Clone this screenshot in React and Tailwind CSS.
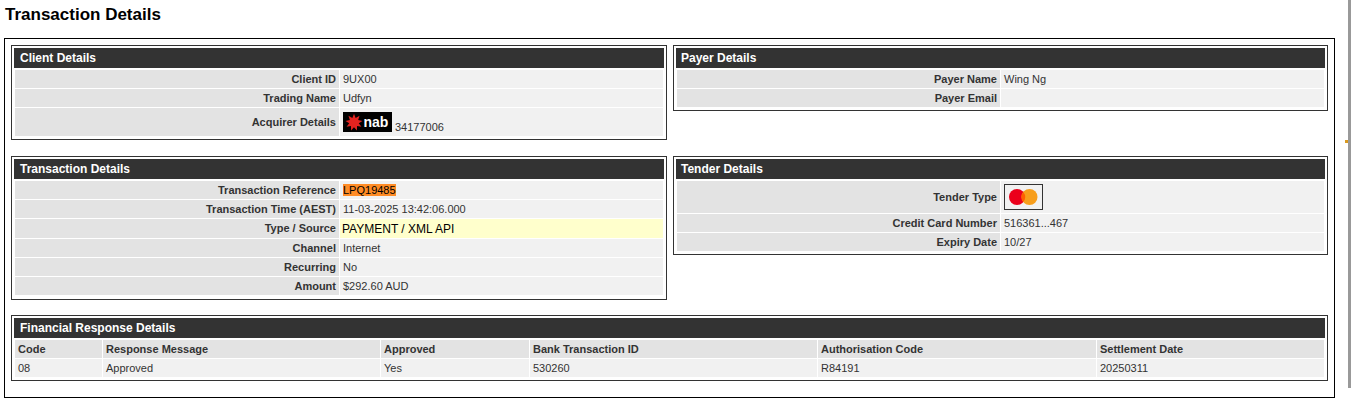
const Panel = ({ title, titleClass = "pl-[6px]", className = "", children }) => (
  <div className={`border border-[#333] px-[2px] pt-[2px] pb-[3px] ${className}`}>
    <h2 className={`h-[20px] bg-[#333] text-[12px] font-bold leading-[20px] text-white ${titleClass}`}>
      {title}
    </h2>
    <div className="mt-[2px] flex flex-col gap-[1px] pl-[1px] pr-[1px]">{children}</div>
  </div>
);

const Row = ({ label, cols = "grid-cols-[324px_1fr]", className = "h-[18px]", valueClass = "bg-[#f1f1f1] pl-[3px] text-[#333]", children }) => (
  <div className={`grid gap-[1px] ${cols} ${className}`}>
    <div className="flex items-center justify-end bg-[#e3e3e3] pr-[3px] font-bold text-[#333]">
      {label}
    </div>
    <div className={`flex items-center ${valueClass}`}>{children}</div>
  </div>
);

// right hand panels have a label column one pixel narrower
const RIGHT_COLS = "grid-cols-[323px_1fr]";

const starPoints = Array.from({ length: 18 }, (_, i) => {
  const radius = i % 2 === 0 ? 8.6 : 4.8;
  const angle = (i * Math.PI) / 9 - Math.PI / 2;
  return `${11 + radius * Math.cos(angle)},${10.400 + radius * Math.sin(angle)}`;
}).join(" ");

const NabLogo = () => (
  <svg width="49" height="20" viewBox="0 0 49 20" className="block">
    <rect width="49" height="20" fill="#000" />
    <polygon points={starPoints} fill="#e3231f" />
    <text x="20.500" y="14.500" fontFamily="'Liberation Sans', sans-serif" fontSize="14" fontWeight="700" fill="#fff">
      nab
    </text>
  </svg>
);

const MastercardLogo = () => (
  <div className="flex h-[26px] w-[39px] items-center justify-center border border-[#333]">
    <svg width="29" height="16" viewBox="0 0 29 16">
      <circle cx="8" cy="8" r="8" fill="#eb001b" />
      <circle cx="20.500" cy="8" r="8" fill="#f79e1b" />
      <path d="M14.250 3a8 8 0 0 1 0 10a8 8 0 0 1 0-10z" fill="#ff5f00" />
    </svg>
  </div>
);

const columns = [
  ["Code", "08", "w-[87px]"],
  ["Response Message", "Approved", "w-[277px]"],
  ["Approved", "Yes", "w-[148px]"],
  ["Bank Transaction ID", "530260", "w-[287px]"],
  ["Authorisation Code", "R84191", "w-[278px]"],
  ["Settlement Date", "20250311", "flex-1"],
];

export default function App() {
  return (
    <div className="relative h-[407px] overflow-hidden bg-white font-['Liberation_Sans',Arial,sans-serif] text-[11px]">
      <h1 className="pl-[5px] pt-[5px] text-[17px] font-bold leading-[20px] text-black">
        Transaction Details
      </h1>

      <div className="ml-[4px] mt-[13px] h-[360px] w-[1331px] border border-black px-[6px] pt-[6px]">
        <div className="grid grid-cols-[656px_655px] gap-x-[6px]">
          <Panel title="Client Details" className="h-[95px]">
            <Row label="Client ID">9UX00</Row>
            <Row label="Trading Name">Udfyn</Row>
            <Row label="Acquirer Details" className="h-[28px]">
              <NabLogo />
              <span className="ml-[3px] mt-[10px]">34177006</span>
            </Row>
          </Panel>
          <Panel title="Payer Details" titleClass="pl-[5px]" className="h-[66px]">
            <Row label="Payer Name" cols={RIGHT_COLS}>Wing Ng</Row>
            <Row label="Payer Email" cols={RIGHT_COLS} />
          </Panel>
        </div>

        <div className="mt-[16px] grid grid-cols-[656px_655px] items-start gap-x-[6px]">
          <Panel title="Transaction Details" className="h-[144px]">
            <Row label="Transaction Reference">
              <span className="bg-[#ff8c26] leading-[12px] text-black">LPQ19485</span>
            </Row>
            <Row label="Transaction Time (AEST)">11-03-2025 13:42:06.000</Row>
            <Row label="Type / Source" className="h-[19px]" valueClass="bg-[#ffffcc] pl-[2px] text-[12px] text-black">
              PAYMENT / XML API
            </Row>
            <Row label="Channel">Internet</Row>
            <Row label="Recurring">No</Row>
            <Row label="Amount">$292.60 AUD</Row>
          </Panel>
          <Panel title="Tender Details" titleClass="pl-[5px]" className="h-[99px]">
            <Row label="Tender Type" cols={RIGHT_COLS} className="h-[32px]">
              <MastercardLogo />
            </Row>
            <Row label="Credit Card Number" cols={RIGHT_COLS}>516361...467</Row>
            <Row label="Expiry Date" cols={RIGHT_COLS}>10/27</Row>
          </Panel>
        </div>

        <div className="mt-[15px] h-[66px] w-[1317px] border border-[#333] px-[2px] pt-[2px]">
          <h2 className="h-[20px] bg-[#333] pl-[6px] text-[12px] font-bold leading-[20px] text-white">
            Financial Response Details
          </h2>
          <div className="mt-[2px] flex gap-[1px] pl-[1px] pr-[1px]">
            {columns.map(([head, value, width]) => (
              <div key={head} className={`flex flex-col gap-[1px] ${width}`}>
                <div className="flex h-[18px] items-center bg-[#e3e3e3] pl-[3px] font-bold text-[#333]">{head}</div>
                <div className="flex h-[18px] items-center bg-[#f1f1f1] pl-[3px] text-[#333]">{value}</div>
              </div>
            ))}
          </div>
        </div>
      </div>

      {/* page scrollbar edge and the small marker next to it */}
      <div className="absolute right-0 top-0 h-[388px] w-[3px] bg-[#999]" />
      <div className="absolute left-[1345px] top-[140px] h-[3px] w-[3px] bg-[#d99a20]" />
    </div>
  );
}
